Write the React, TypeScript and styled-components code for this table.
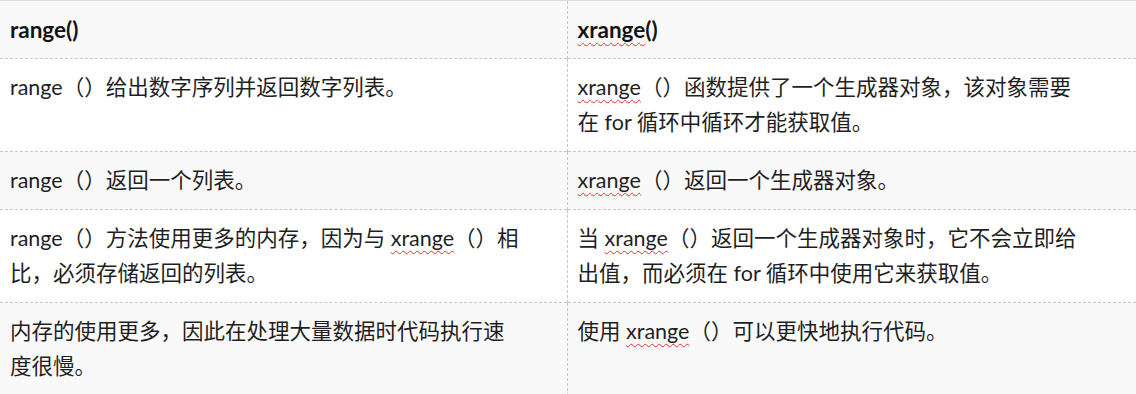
import { createGlobalStyle } from "styled-components";
import styled from "styled-components";

const GlobalStyle = createGlobalStyle`
    html, body {
        margin: 0;
        padding: 0;
        background: #ffffff;
    }
    body {
        font-family: Lato, "Noto Sans CJK SC", sans-serif;
        color: #1f1f1f;
    }
`;

interface RowProps {
    shaded?: boolean;
}

const Table = styled.table`
    width: 1136px;
    border-collapse: collapse;
    table-layout: fixed;
    border-top: 1px solid #dcdcdc;
    font-size: 21.5px;
    line-height: 35px;
`;

const Row = styled.tr<RowProps>`
    background-color: ${(p) => (p.shaded ? "#f9f9f9" : "#ffffff")};
    border-bottom: 1px dashed #c6c6c6;
`;

const HeadCell = styled.th`
    text-align: left;
    font-weight: 700;
    font-size: 22.5px;
    padding: 11px 46px 11px 10px;
    color: #141414;
    & + & {
        border-left: 1px dashed #c6c6c6;
    }
`;

const Cell = styled.td`
    vertical-align: top;
    padding: 11px 45px 11px 10px;
    & + & {
        border-left: 1px dashed #c6c6c6;
        padding-right: 46px;
    }
`;

const Tall = styled.tr`
    background-color: #f9f9f9;
    height: 93px;
`;

// spell-check squiggle under the unknown word
const Misspelt = styled.span`
    text-decoration: underline wavy #e03030;
    text-decoration-thickness: 1px;
    text-decoration-skip-ink: none;
    text-underline-offset: 4px;
`;

const X = () => <Misspelt>xrange</Misspelt>;

export default function App() {
    return (
        <>
            <GlobalStyle />
            <Table>
                <colgroup>
                    <col style={{ width: 567 }} />
                    <col />
                </colgroup>
                <thead>
                    <Row shaded>
                        <HeadCell>range()</HeadCell>
                        <HeadCell>
                            <X />()
                        </HeadCell>
                    </Row>
                </thead>
                <tbody>
                    <Row>
                        <Cell>range（）给出数字序列并返回数字列表。</Cell>
                        <Cell>
                            <X />（）函数提供了一个生成器对象，该对象需要在 for 循环中循环才能获取值。
                        </Cell>
                    </Row>
                    <Row shaded>
                        <Cell>range（）返回一个列表。</Cell>
                        <Cell>
                            <X />（）返回一个生成器对象。
                        </Cell>
                    </Row>
                    <Row>
                        <Cell>
                            range（）方法使用更多的内存，因为与 <X />（）相比，必须存储返回的列表。
                        </Cell>
                        <Cell>
                            当 <X />（）返回一个生成器对象时，它不会立即给出值，而必须在 for 循环中使用它来获取值。
                        </Cell>
                    </Row>
                    <Tall>
                        <Cell>内存的使用更多，因此在处理大量数据时代码执行速度很慢。</Cell>
                        <Cell>
                            使用 <X />（）可以更快地执行代码。
                        </Cell>
                    </Tall>
                </tbody>
            </Table>
        </>
    );
}
